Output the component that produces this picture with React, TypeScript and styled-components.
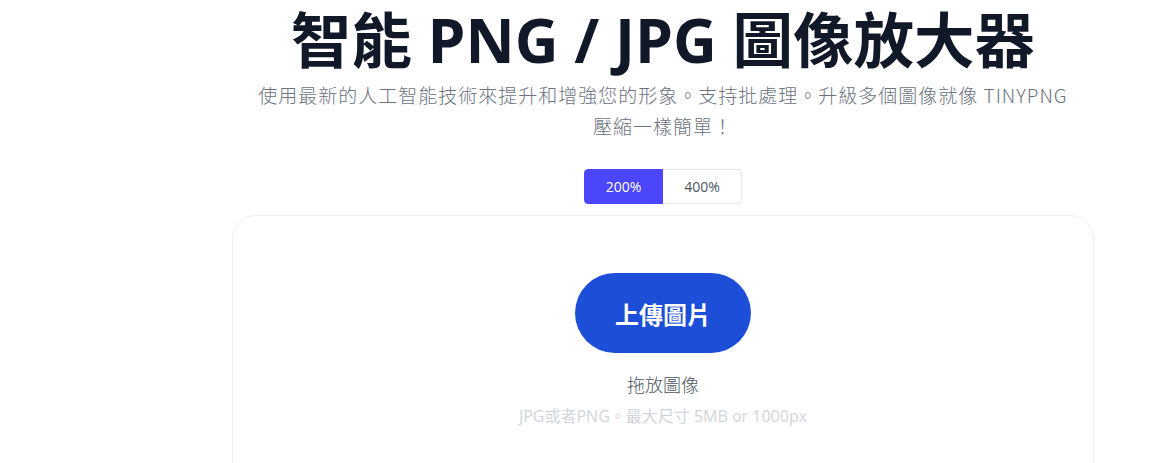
import React, { useState } from "react";
import styled, { createGlobalStyle } from "styled-components";

const Global = createGlobalStyle`
  html, body { margin: 0; padding: 0; background: #ffffff; }
  body { font-family: "Open Sans", "Noto Sans CJK TC", sans-serif; }
`;

const Page = styled.main`
  width: 1151px;
  height: 463px;
  overflow: hidden;
  padding-left: 175px;
  box-sizing: border-box;
  display: flex;
  flex-direction: column;
  align-items: center;
  & > * { flex-shrink: 0; }
`;

const Title = styled.h1`
  margin: 0;
  padding-top: 2px;
  font-family: "Open Sans", "Noto Sans CJK TC", sans-serif;
  font-size: 60.5px;
  font-weight: 700;
  line-height: 76px;
  color: #111827;
  text-align: center;
  white-space: nowrap;
`;

const Subtitle = styled.p`
  margin: 1px 0 0;
  max-width: 815px;
  font-family: "Noto Sans CJK TC", sans-serif;
  font-size: 19px;
  letter-spacing: 1px;
  font-weight: 300;
  line-height: 31px;
  color: #6b7280;
  text-align: center;
`;

const Tabs = styled.div`
  margin-top: 28px;
  display: flex;
`;

const Tab = styled.button<{ $active?: boolean }>`
  width: 79px;
  height: 35px;
  margin: 0;
  padding: 0;
  border: 1px solid ${(p) => (p.$active ? "#4b45fb" : "#e5e7eb")};
  border-left-width: ${(p) => (p.$active ? "1px" : "0")};
  font-family: "Open Sans", sans-serif;
  font-size: 14px;
  cursor: pointer;
  background: ${(p) => (p.$active ? "#4b45fb" : "#ffffff")};
  color: ${(p) => (p.$active ? "#ffffff" : "#4b5563")};
  &:first-child { border-radius: 4px 0 0 4px; }
  &:last-child { border-radius: 0 4px 4px 0; }
`;

const Card = styled.section`
  margin-top: 11px;
  width: 862px;
  height: 300px;
  box-sizing: border-box;
  border: 1px solid #eeeeee;
  border-radius: 24px;
  display: flex;
  flex-direction: column;
  align-items: center;
  padding-top: 57px;
`;

const UploadButton = styled.button`
  width: 176px;
  height: 80px;
  border: none;
  border-radius: 40px;
  background: #1d4ed8;
  color: #ffffff;
  font-family: "Noto Sans CJK TC", sans-serif;
  font-size: 24px;
  font-weight: 700;
  cursor: pointer;
`;

const DropText = styled.div`
  margin-top: 18px;
  font-family: "Noto Sans CJK TC", sans-serif;
  font-size: 18px;
  font-weight: 300;
  color: #4b5563;
  line-height: 26px;
`;

const Hint = styled.div`
  margin-top: 8px;
  font-family: "Open Sans", "Noto Sans CJK TC", sans-serif;
  font-size: 16px;
  color: #d1d5db;
  line-height: 22px;
`;

export default function App() {
  const [scale, setScale] = useState("200%");
  return (
    <>
      <Global />
      <Page>
        <Title>智能 PNG / JPG 圖像放大器</Title>
        <Subtitle>
          使用最新的人工智能技術來提升和增強您的形象。支持批處理。升級多個圖像就像 TINYPNG 壓縮一樣簡單！
        </Subtitle>
        <Tabs>
          {["200%", "400%"].map((s) => (
            <Tab key={s} $active={scale === s} onClick={() => setScale(s)}>
              {s}
            </Tab>
          ))}
        </Tabs>
        <Card>
          <UploadButton>上傳圖片</UploadButton>
          <DropText>拖放圖像</DropText>
          <Hint>JPG或者PNG。最大尺寸 5MB or 1000px</Hint>
        </Card>
      </Page>
    </>
  );
}
